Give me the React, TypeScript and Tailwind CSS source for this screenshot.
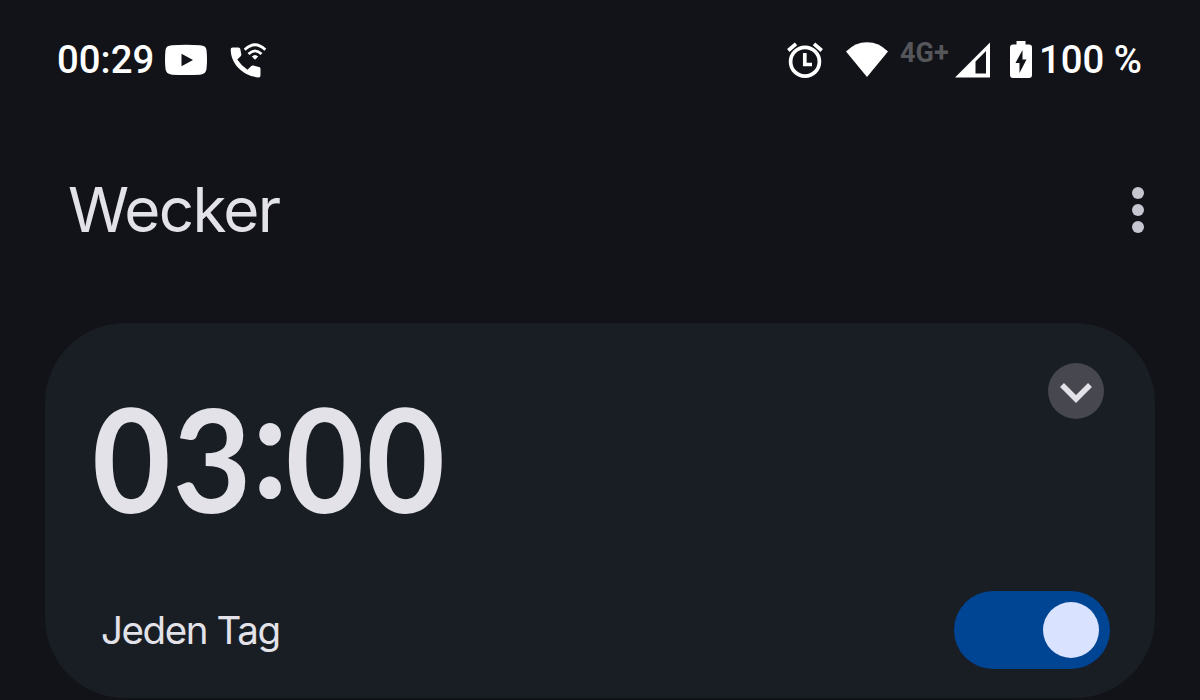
function StatusBar() {
  return (
    <header className="flex h-[120px] items-start justify-between pt-[36px] pr-[57px] pl-[57px] font-['Roboto',sans-serif] text-[39.5px] leading-[48px] font-medium text-white">
      <div className="flex">
        <span className="w-[108px] origin-left scale-x-[0.97] whitespace-nowrap">00:29</span>
        {/* YouTube */}
        <svg className="mt-[8px] h-[32px] w-[42px]" viewBox="0 0 42 32">
          <path
            fill="#fff"
            d="M7 1.200Q21 .4 35 1.200 41 1.500 41.500 6 42.500 16 41.500 25 41 30 35 30.700 21 31.500 7 30.700 1 30 .500 25-.500 16 .500 6 1 1.500 7 1.200Z"
          />
          <path fill="#121318" d="M16.500 9.800v12.400L28 16z" />
        </svg>
        {/* Wi-Fi call */}
        <svg className="mt-[7px] ml-[23px] h-[36px] w-[37px]" viewBox="0 0 37 36">
          <path
            fill="#fff"
            d="M2.500 4.500H8.500Q10 4.500 10.300 6L11.300 11.200Q11.500 12.300 10.700 13.200L7.300 16.600Q11.200 22.800 17.500 26.700L21.300 23Q22.200 22.200 23.300 22.500L29 23.900Q30.500 24.200 30.500 25.700V32.500Q30.500 34.500 28.500 34.400C14.500 33.200.9 22.500.7 6.500Q.7 4.500 2.500 4.500Z"
          />
          <g fill="none" stroke="#fff" strokeWidth="2.700">
            <path d="M14.700 6.800Q25-3.300 35.300 6.800" />
            <path d="M18.500 11Q25 4.700 31.500 11" />
          </g>
          <path fill="#fff" d="M25 16.700 21.800 13.500Q25 10.500 28.200 13.500Z" />
        </svg>
      </div>

      <div className="flex">
        {/* Alarm */}
        <svg className="mt-[5px] h-[38px] w-[38px]" viewBox="0 0 38 38">
          <g fill="none" stroke="#fff" strokeWidth="3.700">
            <circle cx="19" cy="20.700" r="14.400" />
            <path d="M2.300 9.500 10 2.800M35.700 9.500 28 2.800M18.800 12v11.500H26" />
          </g>
        </svg>
        {/* Wi-Fi */}
        <svg className="mt-[6px] ml-[22px] h-[36px] w-[42px]" viewBox="0 0 42 36">
          <path fill="#fff" d="M0 9.500Q9 .2 21 .2T42 9.500L21 35Z" />
        </svg>
        <span className="ml-[12px] w-[54px] text-[27px] leading-[34px] font-bold text-[#55565a]">4G+</span>
        {/* Cell signal */}
        <svg className="mt-[6px] ml-px h-[36px] w-[36px]" viewBox="0 0 36 36">
          <path fill="#fff" fillRule="evenodd" d="M0 35.500 35 .500v35zM20.500 19.500V31.500H31V9Z" />
        </svg>
        {/* Charging battery */}
        <svg className="mt-[5px] ml-[19px] h-[38px] w-[22px]" viewBox="0 0 22 38">
          <path
            fill="#fff"
            d="M6.500 0h9v3.500H19q3 0 3 3V34q0 3-3 3H3q-3 0-3-3V6.500q0-3 3-3h3.500z"
          />
          <path fill="#121318" d="M12.500 9 5.500 22H9.500V32L16.500 18.500H12.500Z" />
        </svg>
        <span className="ml-[7px] w-[104px] origin-left scale-x-[0.97] whitespace-nowrap">100 %</span>
      </div>
    </header>
  );
}

function Toggle() {
  return (
    <button
      role="switch"
      aria-checked="true"
      aria-label="Wecker 03:00"
      className="flex h-[78px] w-[156px] items-center justify-end rounded-full bg-[#004494] pr-[11px]"
    >
      <span className="size-[56px] rounded-full bg-[#d9e2ff]" />
    </button>
  );
}

function AlarmCard() {
  return (
    <section className="ml-[45px] flex h-[375px] w-[1110px] flex-col justify-between rounded-[80px] bg-[#191e24] pt-[40px] pr-[45px] pb-[29px] pl-[48px]">
      <div className="flex items-start justify-between">
        <time className="mt-[10px] -ml-px flex h-[170px] origin-left scale-x-[0.95] items-center text-[143px] leading-[170px] font-bold tracking-[2.1px] whitespace-nowrap">
          <span>03</span>
          <span className="-mt-[36px] -mr-[3px] -ml-[2px] text-[150px] tracking-normal">:</span>
          <span>00</span>
        </time>
        <button className="mr-[6px] grid size-[56px] place-items-center rounded-full bg-[#46474f]" aria-label="Details">
          <svg className="mt-[4px] h-[20px] w-[32px]" viewBox="0 0 32 20">
            <path d="M2 2 16 16 30 2" fill="none" stroke="#e3e2e9" strokeWidth="5.500" />
          </svg>
        </button>
      </div>
      <div className="flex items-center justify-between pl-[8px]">
        <span className="font-['Inter',sans-serif] text-[38.500px] leading-[48px] tracking-[-1.400px]">Jeden Tag</span>
        <Toggle />
      </div>
    </section>
  );
}

export default function App() {
  return (
    <main className="h-[700px] w-[1200px] overflow-hidden bg-[#121318] font-['Lato',sans-serif] text-[#e3e2e9]">
      <StatusBar />
      <div className="flex h-[203px] items-start justify-between pr-[56px] pl-[68px]">
        <h1 className="mt-[50px] font-['Inter',sans-serif] text-[62px] leading-[80px] tracking-[-1.700px]">Wecker</h1>
        <button className="mt-[67px] flex flex-col gap-[5px]" aria-label="Mehr">
          <span className="size-[12px] rounded-full bg-[#c6c6d0]" />
          <span className="size-[12px] rounded-full bg-[#c6c6d0]" />
          <span className="size-[12px] rounded-full bg-[#c6c6d0]" />
        </button>
      </div>
      <AlarmCard />
    </main>
  );
}
